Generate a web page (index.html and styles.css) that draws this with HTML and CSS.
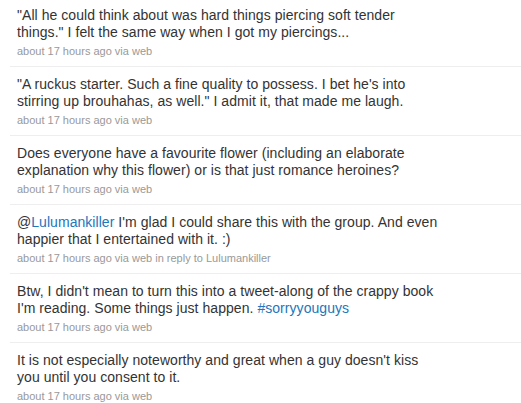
FILE: index.html
```html
<!DOCTYPE html>
<html>
<head>
<meta charset="utf-8">
<link rel="stylesheet" href="styles.css">
</head>
<body>
<ol class="timeline">
  <li class="status">
    <p class="entry">"All he could think about was hard things piercing soft tender things." I felt the same way when I got my piercings...</p>
    <p class="meta">about 17 hours ago via web</p>
  </li>
  <li class="status">
    <p class="entry">"A ruckus starter. Such a fine quality to possess. I bet he's into stirring up brouhahas, as well." I admit it, that made me laugh.</p>
    <p class="meta">about 17 hours ago via web</p>
  </li>
  <li class="status">
    <p class="entry">Does everyone have a favourite flower (including an elaborate explanation why this flower) or is that just romance heroines?</p>
    <p class="meta">about 17 hours ago via web</p>
  </li>
  <li class="status">
    <p class="entry">@<a class="link" href="#">Lulumankiller</a> I'm glad I could share this with the group. And even happier that I entertained with it. :)</p>
    <p class="meta">about 17 hours ago via web in reply to Lulumankiller</p>
  </li>
  <li class="status">
    <p class="entry">Btw, I didn't mean to turn this into a tweet-along of the crappy book I'm reading. Some things just happen. <a class="link" href="#">#sorryyouguys</a></p>
    <p class="meta">about 17 hours ago via web</p>
  </li>
  <li class="status">
    <p class="entry">It is not especially noteworthy and great when a guy doesn't kiss you until you consent to it.</p>
    <p class="meta">about 17 hours ago via web</p>
  </li>
</ol>
</body>
</html>
```
FILE: styles.css
```css
html, body {
  margin: 0;
  padding: 0;
  background: #fff;
}
body {
  font-family: "Liberation Sans", Arial, sans-serif;
  overflow: hidden;
}
.timeline {
  list-style: none;
  margin: -3px 0 0 10px;
  padding: 0;
}
.status {
  border-top: 1px solid #eeeeee;
  padding: 9px 0 7px 7px;
}
.entry {
  margin: 0;
  width: 424px;
  font-size: 14px;
  line-height: 17px;
  letter-spacing: 0.05px;
  color: #333333;
}
.link {
  color: #2276bb;
  text-decoration: none;
}
.meta {
  margin: 3px 0 0;
  font-size: 11px;
  line-height: 15px;
  color: #999999;
}
```
